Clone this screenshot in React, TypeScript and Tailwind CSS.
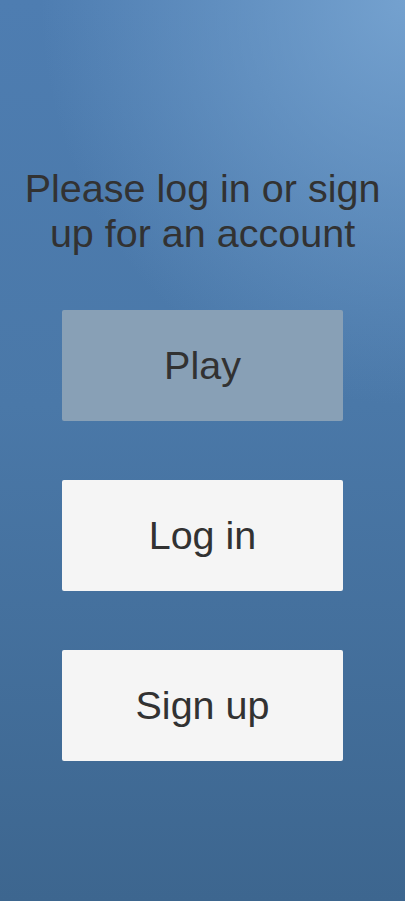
export default function App() {
  const buttons = [
    { label: 'Play', disabled: true },
    { label: 'Log in', disabled: false },
    { label: 'Sign up', disabled: false },
  ];

  return (
    <div
      className="min-h-[901px] w-full bg-[radial-gradient(ellipse_90%_45%_at_100%_0%,rgba(120,165,210,0.9)_0%,rgba(120,165,210,0)_100%),linear-gradient(to_bottom,#4e7db1,#4a78a8_45%,#3d668f)] flex flex-col items-center pt-[166px] text-[#323232]"
      style={{ fontFamily: '"Liberation Sans", Arial, sans-serif' }}
    >
      <h1 className="text-[39.5px] leading-[45px] text-center font-normal px-2">
        Please log in or sign
        <br />
        up for an account
      </h1>

      <div className="flex flex-col gap-[59px] mt-[54px]">
        {buttons.map((b) => (
          <button
            key={b.label}
            disabled={b.disabled}
            className={
              b.disabled
                ? 'w-[281px] h-[111px] rounded-[2px] bg-[#88a0b6] text-[39.5px] text-[#323232]'
                : 'w-[281px] h-[111px] rounded-[2px] bg-[#f5f5f5] text-[39.5px] text-[#323232]'
            }
          >
            {b.label}
          </button>
        ))}
      </div>
    </div>
  );
}
